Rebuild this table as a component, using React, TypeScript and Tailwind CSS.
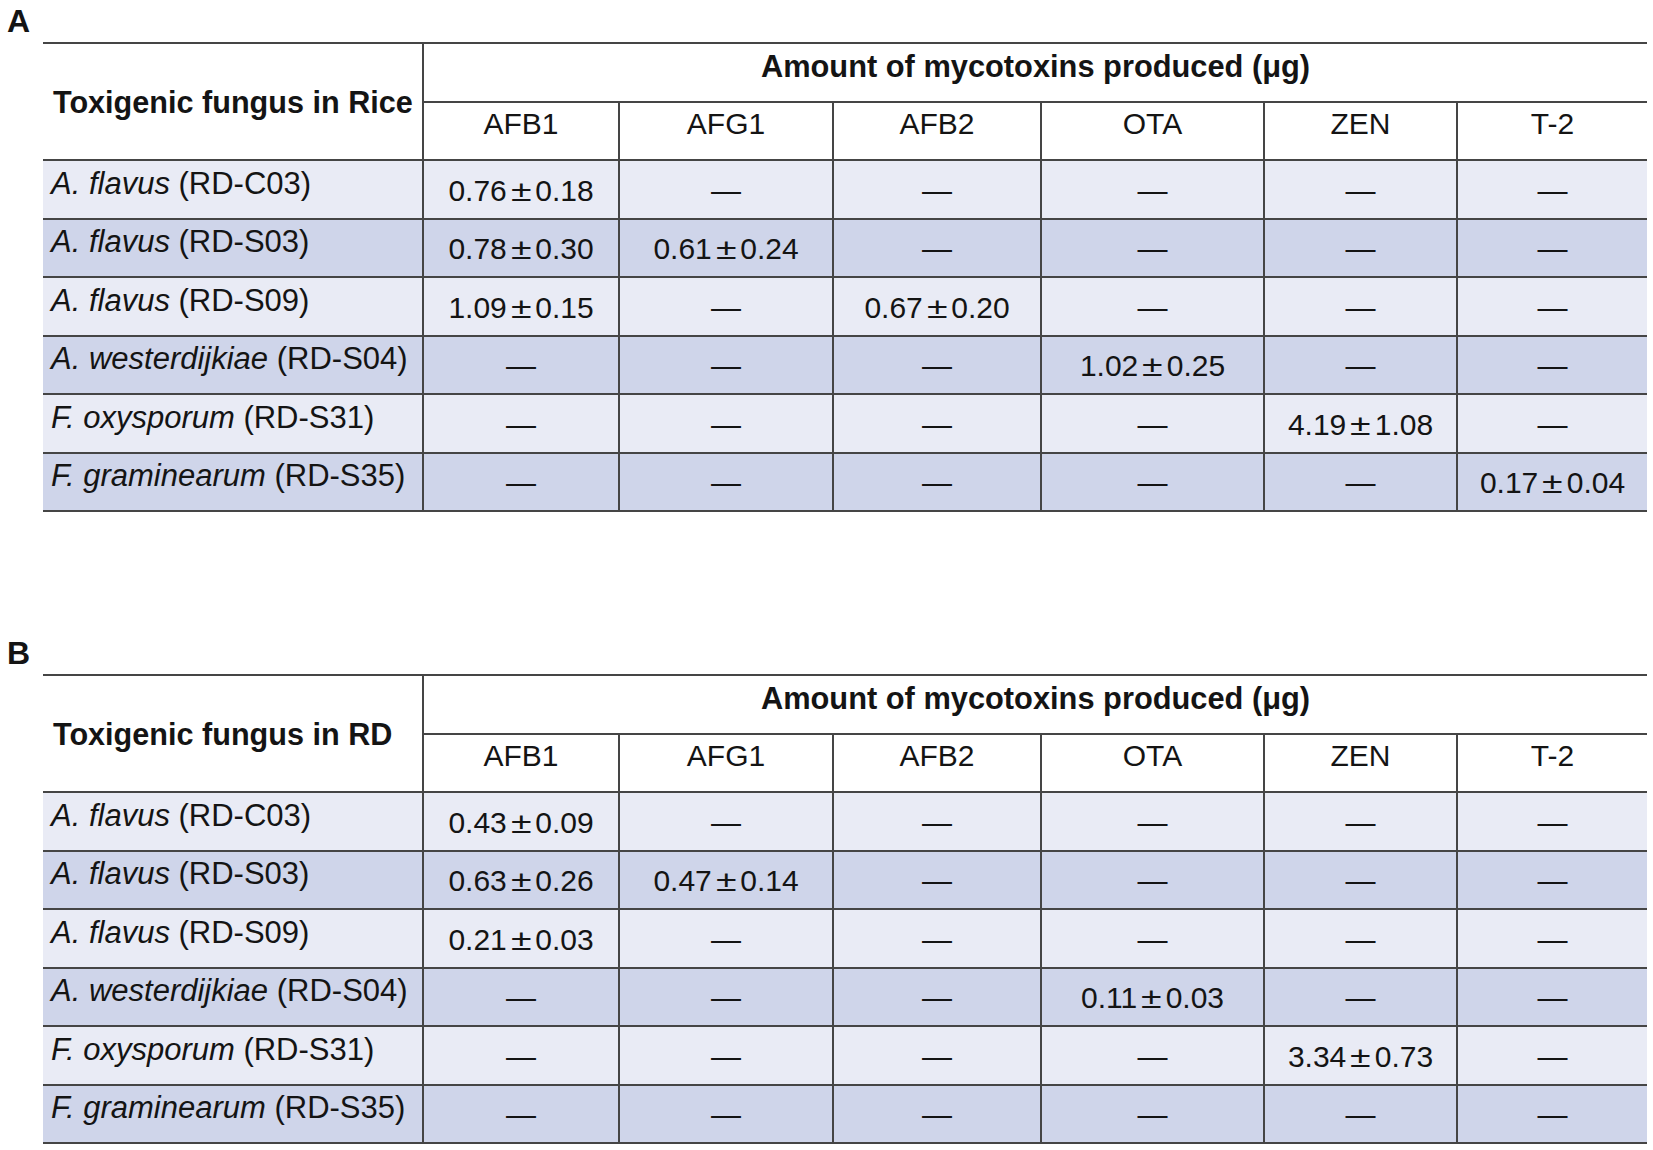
import type React from "react"

type Row = { genus: string; strain: string; values: (string | null)[] }

const toxins = ["AFB1", "AFG1", "AFB2", "OTA", "ZEN", "T-2"]

const riceRows: Row[] = [
  { genus: "A. flavus", strain: "(RD-C03)", values: ["0.76|0.18", null, null, null, null, null] },
  { genus: "A. flavus", strain: "(RD-S03)", values: ["0.78|0.30", "0.61|0.24", null, null, null, null] },
  { genus: "A. flavus", strain: "(RD-S09)", values: ["1.09|0.15", null, "0.67|0.20", null, null, null] },
  { genus: "A. westerdijkiae", strain: "(RD-S04)", values: [null, null, null, "1.02|0.25", null, null] },
  { genus: "F. oxysporum", strain: "(RD-S31)", values: [null, null, null, null, "4.19|1.08", null] },
  { genus: "F. graminearum", strain: "(RD-S35)", values: [null, null, null, null, null, "0.17|0.04"] },
]

const rdRows: Row[] = [
  { genus: "A. flavus", strain: "(RD-C03)", values: ["0.43|0.09", null, null, null, null, null] },
  { genus: "A. flavus", strain: "(RD-S03)", values: ["0.63|0.26", "0.47|0.14", null, null, null, null] },
  { genus: "A. flavus", strain: "(RD-S09)", values: ["0.21|0.03", null, null, null, null, null] },
  { genus: "A. westerdijkiae", strain: "(RD-S04)", values: [null, null, null, "0.11|0.03", null, null] },
  { genus: "F. oxysporum", strain: "(RD-S31)", values: [null, null, null, null, "3.34|0.73", null] },
  { genus: "F. graminearum", strain: "(RD-S35)", values: [null, null, null, null, null, null] },
]

const Value: React.FC<{ v: string | null }> = ({ v }) => {
  if (!v) return <span>—</span>
  const [mean, sd] = v.split("|")
  return (
    <span>
      {mean}
      <span className="inline-block mx-[6px] font-light scale-x-125">±</span>
      {sd}
    </span>
  )
}

const ToxinTable: React.FC<{ label: string; title: string; rows: Row[] }> = ({ label, title, rows }) => (
  <section>
    <div className="h-[42px] pl-[7px] pt-[5px]">
      <span className="block text-[32px] leading-[32px] font-bold">{label}</span>
    </div>
    <div className="ml-[43px] w-[1604px] border-t-2 border-[#454545] grid grid-cols-[381px_196px_214px_208px_223px_193px_189px] auto-rows-[58.5px]">
      <div className="row-span-2 flex items-center pl-[10px] border-b-2 border-r-2 border-[#454545] bg-white font-bold text-[30.6px]">
        {title}
      </div>
      <div className="col-span-6 flex items-center justify-center pb-[10px] border-b-2 border-[#454545] bg-white font-bold text-[30.8px]">
        Amount of mycotoxins produced (μg)
      </div>
      {toxins.map((t, i) => (
        <div
          key={t}
          className={`flex items-center justify-center pb-[14px] border-b-2 border-[#454545] bg-white ${i < 5 ? "border-r-2" : ""}`}
        >
          {t}
        </div>
      ))}
      {rows.map((r, ri) => {
        const bg = ri % 2 === 0 ? "bg-[#e9ebf5]" : "bg-[#cfd5ea]"
        return [
          <div key={`n${ri}`} className={`flex items-center pl-[8px] pb-[11px] text-[31px] border-b-2 border-r-2 border-[#454545] ${bg}`}>
            <span>
              <i>{r.genus}</i> {r.strain}
            </span>
          </div>,
          ...r.values.map((v, ci) => (
            <div
              key={`v${ri}-${ci}`}
              className={`flex items-center justify-center pt-[3px] border-b-2 border-[#454545] ${bg} ${ci < 5 ? "border-r-2" : ""}`}
            >
              <Value v={v} />
            </div>
          )),
        ]
      })}
    </div>
  </section>
)

export default function App() {
  return (
    <div className="w-[1653px] h-[1150px] bg-white text-[#141414] text-[30px] leading-[34px] font-['Liberation_Sans',Arial,sans-serif] overflow-hidden">
      <ToxinTable label="A" title="Toxigenic fungus in Rice" rows={riceRows} />
      <div className="h-[120px]" />
      <ToxinTable label="B" title="Toxigenic fungus in RD" rows={rdRows} />
    </div>
  )
}
